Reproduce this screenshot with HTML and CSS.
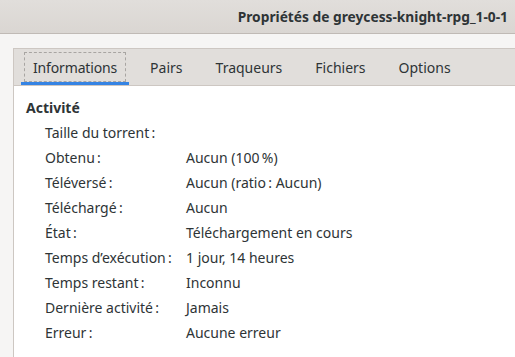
FILE: index.html
```html
<!DOCTYPE html>
<html lang="fr">
<head>
    <meta charset="UTF-8">
    <title>Propriétés</title>
    <link rel="stylesheet" href="styles.css">
</head>
<body>
<div class="window">
    <div class="titlebar">
        <span class="title">Propriétés de greycess-knight-rpg_1-0-1</span>
    </div>
    <div class="body">
        <div class="notebook">
            <ul class="tabs">
                <li class="tab selected"><span>Informations</span></li>
                <li class="tab"><span>Pairs</span></li>
                <li class="tab"><span>Traqueurs</span></li>
                <li class="tab"><span>Fichiers</span></li>
                <li class="tab"><span>Options</span></li>
            </ul>
            <div class="page">
                <h3 class="section">Activité</h3>
                <div class="grid">
                    <div class="label">Taille du torrent&#8239;:</div><div class="value"></div>
                    <div class="label">Obtenu&#8239;:</div><div class="value">Aucun (100&#8239;%)</div>
                    <div class="label">Téléversé&#8239;:</div><div class="value">Aucun (ratio&#8239;: Aucun)</div>
                    <div class="label">Téléchargé&#8239;:</div><div class="value">Aucun</div>
                    <div class="label">État&#8239;:</div><div class="value">Téléchargement en cours</div>
                    <div class="label">Temps d’exécution&#8239;:</div><div class="value">1 jour, 14 heures</div>
                    <div class="label">Temps restant&#8239;:</div><div class="value">Inconnu</div>
                    <div class="label">Dernière activité&#8239;:</div><div class="value">Jamais</div>
                    <div class="label">Erreur&#8239;:</div><div class="value">Aucune erreur</div>
                </div>
            </div>
        </div>
    </div>
</div>
</body>
</html>
```
FILE: styles.css
```css
*{
    margin: 0;
    padding: 0;
    box-sizing: border-box;
}
ul{
    list-style: none;
}
html,body{
    height: 100%;
}
body{
    font-family: "Noto Sans", sans-serif;
    font-size: 14px;
    color: #2e3436;
    background: #f6f5f4;
    overflow: hidden;
}
.window{
    height: 100%;
    display: flex;
    flex-direction: column;
}
.titlebar{
    height: 34px;
    flex: none;
    background: linear-gradient(#e1dedb, #dad6d2);
    border-bottom: 1px solid #c0bab5;
    display: flex;
    align-items: center;
    justify-content: flex-end;
    padding-right: 7px;
}
.title{
    font-weight: bold;
    font-size: 13.75px;
}
.body{
    flex: 1;
    padding: 14px 0 0 13px;
    display: flex;
}
.notebook{
    flex: 1;
    border-left: 1px solid #cdc7c2;
    border-top: 1px solid #cdc7c2;
    background: #fff;
    display: flex;
    flex-direction: column;
}
.tabs{
    height: 37px;
    flex: none;
    background: #e1dedb;
    border-bottom: 1px solid #cdc7c2;
    display: flex;
    gap: 9px;
    padding-left: 7px;
}
.tab{
    padding: 0 12px;
    display: flex;
    align-items: center;
    cursor: pointer;
}
.tab.selected{
    box-shadow: inset 0 -3px 0 #3584e4;
    outline: 1px dashed #a8a5a2;
    outline-offset: -4px;
}
.tab.selected span{
    letter-spacing: -0.15px;
}
.page{
    padding: 9px 12px;
}
.section{
    font-size: 14px;
    font-weight: bold;
    line-height: 25px;
}
.grid{
    display: grid;
    grid-template-columns: 141px 1fr;
    padding-left: 19px;
    line-height: 25px;
}
```
